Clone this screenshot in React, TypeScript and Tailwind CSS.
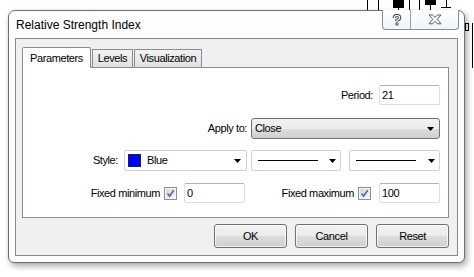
import React from "react";

function Arrow() {
  return (
    <svg width="7" height="4" viewBox="0 0 7 4" className="shrink-0">
      <polygon points="0,0 7,0 3.5,4" fill="#000" />
    </svg>
  );
}

function CheckBox() {
  return (
    <div className="w-[13px] h-[13px] border border-[#8e8f8f] bg-[#f4f4f4] p-[1px] shrink-0">
      <div className="relative w-full h-full bg-gradient-to-br from-[#d6d8db] to-[#f6f6f6] flex items-center justify-center">
        <svg width="9" height="9" viewBox="0 0 9 9" className="absolute left-0 top-0">
          <path d="M1.5 4.5 L3.6 7 L7.8 1.2" fill="none" stroke="#5a6f9c" strokeWidth="1.7" />
        </svg>
      </div>
    </div>
  );
}

function TextBox({ value, w }: { value: string; w: string }) {
  return (
    <div
      className={`${w} h-[20px] border border-[#d9dee6] border-t-[#b0b4bc] rounded-[2px] bg-white flex items-center pl-[2px] shrink-0`}
    >
      {value}
    </div>
  );
}

function WinButton({ label }: { label: string }) {
  return (
    <div className="w-[73px] h-[24px] rounded-[3px] border border-[#707070] flex items-center justify-center bg-[linear-gradient(to_bottom,#f2f2f2_0%,#ebebeb_50%,#dddddd_51%,#cfcfcf_100%)] shadow-[inset_0_0_0_1px_rgba(255,255,255,0.7)]">
      {label}
    </div>
  );
}

export default function App() {
  return (
    <div className="relative w-[474px] h-[277px] bg-white overflow-hidden font-[Liberation_Sans,Arial,sans-serif] text-[11px] tracking-[-0.4px] text-black">
      {/* chart fragments behind the window */}
      <div className="absolute left-[367px] top-0 w-px h-[12px] bg-black" />
      <div className="absolute left-[378px] top-0 w-px h-[12px] bg-black" />
      <div className="absolute left-[393px] top-0 w-[11px] h-[8px] bg-black" />
      <div className="absolute left-[398px] top-0 w-px h-[12px] bg-black" />
      <div className="absolute left-[409px] top-0 w-px h-[12px] bg-black" />
      <div className="absolute left-[419px] top-0 w-px h-[12px] bg-black" />
      <div className="absolute left-[425px] top-0 w-[11px] h-[5px] bg-black" />
      <div className="absolute left-[430px] top-0 w-px h-[12px] bg-black" />
      <div className="absolute left-[446px] top-0 w-px h-[8px] bg-black" />
      <div className="absolute left-[441px] top-[7px] w-[10px] h-px bg-black" />
      <div className="absolute left-[465px] top-[23px] w-[4px] h-[8px] border border-black" />
      <div className="absolute left-[472px] top-[23px] w-px h-[45px] bg-black" />

      {/* window */}
      <div className="absolute left-[8px] top-[10px] w-[457px] h-[253px] rounded-t-[7px] rounded-b-[6px] border border-[#6e6e6e] bg-[#fdfdfd] shadow-[2px_3px_6px_rgba(0,0,0,0.35)] flex flex-col">
        {/* caption buttons */}
        <div className="absolute top-[-1px] right-[5px] w-[77px] h-[20px] flex border border-[#8c8c8c] border-t-0 rounded-b-[4px] overflow-hidden bg-[linear-gradient(to_bottom,#ffffff,#eef5fb)]">
          <div className="w-[28px] h-full border-r border-[#a0a0a0] flex items-center justify-center">
            <svg width="10" height="12" viewBox="0 0 10 12">
              <path d="M2.3 4 Q2.3 1.5 5 1.5 Q7.7 1.5 7.7 3.7 Q7.7 5.3 5 6.2 L5 7.6" fill="none" stroke="#4a4a4a" strokeWidth="3.2" />
              <path d="M2.3 4 Q2.3 1.5 5 1.5 Q7.7 1.5 7.7 3.7 Q7.7 5.3 5 6.2 L5 7.6" fill="none" stroke="#ffffff" strokeWidth="1.2" />
              <circle cx="5" cy="10" r="1.7" fill="#4a4a4a" />
              <circle cx="5" cy="10" r="0.7" fill="#ffffff" />
            </svg>
          </div>
          <div className="flex-1 h-full flex items-center justify-center">
            <svg width="14" height="11" viewBox="0 0 14 11">
              <path
                d="M1 1 H4.6 L7 3.4 L9.4 1 H13 L9.2 5.3 L13 9.8 H9.4 L7 7.3 L4.6 9.8 H1 L4.8 5.3 Z"
                fill="#ffffff"
                stroke="#5a5a5a"
                strokeWidth="1"
                strokeLinejoin="round"
              />
            </svg>
          </div>
        </div>

        {/* title */}
        <div className="h-[27px] flex items-center pl-[7px] pt-[1px] text-[12px] tracking-normal shrink-0">
          Relative Strength Index
        </div>

        {/* client area */}
        <div className="flex-1 px-[6px] pb-[6px] flex">
          <div className="flex-1 border border-[#8a8a8a] bg-[#f0f0f0] flex flex-col pt-[8px] pl-[6px] pr-[8px] pb-[7px]">
            {/* tabs */}
            <div className="h-[20px] flex items-end shrink-0">
              <div className="relative z-10 w-[69px] h-[21px] -mb-px border border-b-0 border-[#898c95] rounded-t-[2px] bg-white flex items-center justify-center">
                Parameters
              </div>
              <div className="ml-px w-[41px] h-[18px] border border-b-0 border-[#898c95] bg-[linear-gradient(to_bottom,#f2f2f2,#e1e1e1)] flex items-center justify-center">
                Levels
              </div>
              <div className="ml-px w-[68px] h-[18px] border border-b-0 border-[#898c95] bg-[linear-gradient(to_bottom,#f2f2f2,#e1e1e1)] flex items-center justify-center">
                Visualization
              </div>
            </div>

            {/* panel */}
            <div className="h-[151px] border border-[#898c95] bg-white flex flex-col pr-[8px] shrink-0 whitespace-nowrap">
              {/* period */}
              <div className="mt-[17px] h-[20px] flex items-center justify-end">
                <span className="mr-[6px]">Period:</span>
                <TextBox value="21" w="w-[61px]" />
              </div>
              {/* apply to */}
              <div className="mt-[13px] h-[21px] flex items-center justify-end">
                <span className="mr-[4px]">Apply to:</span>
                <div className="w-[189px] h-[21px] rounded-[3px] border border-[#707070] bg-[linear-gradient(to_bottom,#f2f2f2_0%,#ebebeb_50%,#dddddd_51%,#cfcfcf_100%)] flex items-center justify-between pl-[3px] pr-[5px]">
                  <span>Close</span>
                  <Arrow />
                </div>
              </div>
              {/* style */}
              <div className="mt-[11px] h-[21px] flex items-center justify-end">
                <span className="mr-[6px]">Style:</span>
                <div className="w-[123px] h-[21px] rounded-[2px] border border-[#cdd1d8] bg-white flex items-center pl-[3px] pr-[5px]">
                  <div className="w-[13px] h-[13px] bg-[#0000ff] border border-[#1c1c70]" />
                  <span className="ml-[6px] flex-1">Blue</span>
                  <Arrow />
                </div>
                <div className="ml-[4px] w-[90px] h-[21px] rounded-[2px] border border-[#cdd1d8] bg-white flex items-center pl-[6px] pr-[4px]">
                  <div className="w-[60px] h-px bg-black" />
                  <div className="flex-1" />
                  <Arrow />
                </div>
                <div className="ml-[8px] w-[91px] h-[21px] rounded-[2px] border border-[#cdd1d8] bg-white flex items-center pl-[6px] pr-[4px]">
                  <div className="w-[60px] h-px bg-black" />
                  <div className="flex-1" />
                  <Arrow />
                </div>
              </div>
              {/* fixed min / max */}
              <div className="mt-[12px] h-[20px] flex items-center justify-end">
                <div className="flex items-center">
                  <span className="mr-[4px]">Fixed minimum</span>
                  <CheckBox />
                  <div className="ml-[7px]">
                    <TextBox value="0" w="w-[61px]" />
                  </div>
                </div>
                <div className="ml-[36px] w-[159px] flex items-center justify-end shrink-0">
                  <span className="mr-[4px]">Fixed maximum</span>
                  <CheckBox />
                  <div className="ml-[8px]">
                    <TextBox value="100" w="w-[61px]" />
                  </div>
                </div>
              </div>
            </div>

            {/* buttons */}
            <div className="mt-[6px] flex justify-end gap-[8px] shrink-0">
              <WinButton label="OK" />
              <WinButton label="Cancel" />
              <WinButton label="Reset" />
            </div>
          </div>
        </div>
      </div>
    </div>
  );
}
